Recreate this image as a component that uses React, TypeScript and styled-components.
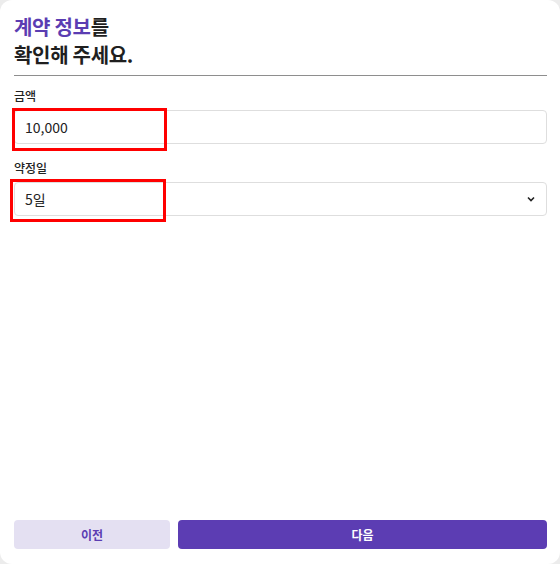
import React from "react";
import styled, { createGlobalStyle } from "styled-components";

const Global = createGlobalStyle`
  html, body { margin: 0; padding: 0; background: #ececec; }
  body { font-family: "Noto Sans CJK KR", "Noto Sans", sans-serif; }
`;

const Card = styled.div`
  width: 560px;
  height: 564px;
  box-sizing: border-box;
  background: #fff;
  border-radius: 12px;
  padding: 13px 13px 14px 14px;
  display: flex;
  flex-direction: column;
`;

const Title = styled.h1`
  margin: 0;
  font-size: 20px;
  font-weight: 700;
  line-height: 28px;
  color: #1f1f1f;
  letter-spacing: -0.3px;
`;

const Accent = styled.span`
  color: #5b3db2;
`;

const Divider = styled.hr`
  margin: 6px 0 0;
  border: none;
  border-top: 1px solid #8e8e8e;
`;

const Field = styled.div<{ $top: number }>`
  display: flex;
  flex-direction: column;
  margin-top: ${(p) => p.$top}px;
`;

const Label = styled.label`
  font-size: 12px;
  line-height: 17px;
  color: #222;
  font-weight: 500;
`;

const BoxWrap = styled.div`
  position: relative;
  margin-top: 6px;
`;

const Box = styled.div`
  height: 34px;
  box-sizing: border-box;
  border: 1px solid #dedede;
  border-radius: 4px;
  display: flex;
  align-items: center;
  justify-content: space-between;
  padding: 0 10px 0 10px;
  font-size: 14px;
  color: #222;
`;

const Highlight = styled.div<{ $l: number; $t: number; $w: number; $h: number }>`
  position: absolute;
  left: ${(p) => p.$l}px;
  top: ${(p) => p.$t}px;
  width: ${(p) => p.$w}px;
  height: ${(p) => p.$h}px;
  box-sizing: border-box;
  border: 3px solid #ff0000;
  pointer-events: none;
`;

const Spacer = styled.div`
  flex: 1;
`;

const Buttons = styled.div`
  display: grid;
  grid-template-columns: 156px 1fr;
  gap: 8px;
  margin-bottom: 1px;
`;

const Button = styled.button<{ $primary?: boolean }>`
  height: 29px;
  border: none;
  border-radius: 4px;
  font-family: inherit;
  font-size: 12px;
  font-weight: 700;
  background: ${(p) => (p.$primary ? "#5c3db3" : "#e4e0f2")};
  color: ${(p) => (p.$primary ? "#ffffff" : "#5b3db2")};
`;

const Chevron = () => (
  <svg width="10" height="10" viewBox="0 0 10 10">
    <path d="M2 3.5 L5 6.5 L8 3.5" fill="none" stroke="#222" strokeWidth="1.6" />
  </svg>
);

export default function App() {
  return (
    <>
      <Global />
      <Card>
        <Title>
          <Accent>계약 정보</Accent>를
          <br />
          확인해 주세요.
        </Title>
        <Divider />
        <Field $top={11}>
          <Label>금액</Label>
          <BoxWrap>
            <Box>10,000</Box>
            <Highlight $l={-2} $t={-2} $w={155} $h={43} />
          </BoxWrap>
        </Field>
        <Field $top={15}>
          <Label>약정일</Label>
          <BoxWrap>
            <Box>
              5일
              <Chevron />
            </Box>
            <Highlight $l={-4} $t={-3} $w={156} $h={43} />
          </BoxWrap>
        </Field>
        <Spacer />
        <Buttons>
          <Button>이전</Button>
          <Button $primary>다음</Button>
        </Buttons>
      </Card>
    </>
  );
}
